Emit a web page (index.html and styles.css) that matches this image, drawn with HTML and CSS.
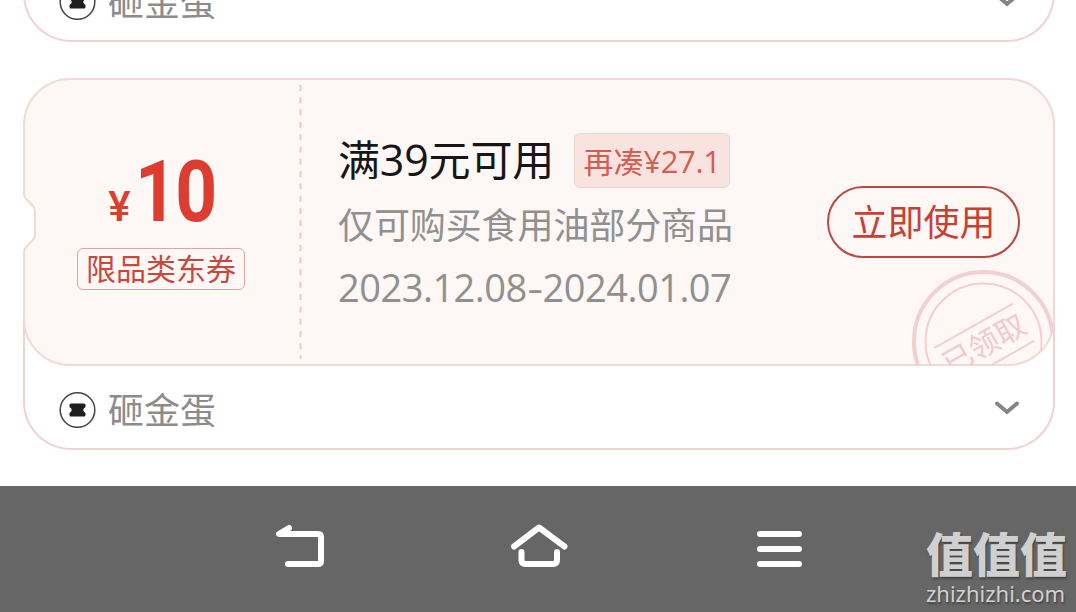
FILE: index.html
```html
<!DOCTYPE html>
<html lang="zh-CN">
<head>
  <meta charset="utf-8">
  <title>优惠券</title>
  <link rel="stylesheet" href="styles.css">
</head>
<body>

  <div class="coupon-list">
    <div class="coupon-footer previous">
      <svg class="ticket-icon" width="38" height="38" viewBox="0 0 38 38">
        <circle cx="19.500" cy="19" r="17.3"/>
        <path d="M13 12.500h13q1.500 0 1.500 1.500v2q-4.500 3 0 6v2q0 1.500-1.500 1.500h-13q-1.500 0-1.500-1.500v-2q4.500-3 0-6v-2q0-1.500 1.500-1.500z"/>
      </svg>
      <span class="source">砸金蛋</span>
      <svg class="chevron" width="26" height="16" viewBox="0 0 26 16"><path d="M3 3.500l10 8.500 10-8.500"/></svg>
    </div>

    <div class="coupon">
      <div class="coupon-main">
        <svg class="coupon-bg" width="1032" height="288" viewBox="0 0 1032 288">
          <defs>
            <clipPath id="panel">
              <path d="M47 1H985A46 46 0 0 1 1031 47V241A46 46 0 0 1 985 287H47A46 46 0 0 1 1 241V174Q1 171 4 168L9 163Q12 160 12 156V134Q12 130 9 127L4 122Q1 119 1 116V47A46 46 0 0 1 47 1Z"/>
            </clipPath>
          </defs>
          <path class="panel" d="M47 1H985A46 46 0 0 1 1031 47V241A46 46 0 0 1 985 287H47A46 46 0 0 1 1 241V174Q1 171 4 168L9 163Q12 160 12 156V134Q12 130 9 127L4 122Q1 119 1 116V47A46 46 0 0 1 47 1Z"/>
          <path class="divider" d="M277.500 7V281"/>
          <g class="stamp" clip-path="url(#panel)">
            <circle class="ring" cx="960.500" cy="263.500" r="69.500"/>
            <circle cx="960.500" cy="263.500" r="58"/>
            <g transform="translate(961 266) rotate(-29.500)">
              <path d="M-45 -21H45M-45 22H45"/>
              <text x="0" y="11" text-anchor="middle">已领取</text>
            </g>
          </g>
        </svg>

        <div class="amount-col">
          <div class="amount"><span class="yen">¥</span><span class="num">10</span></div>
          <span class="type">限品类东券</span>
        </div>
        <div class="info">
          <div class="title-row">
            <span class="title">满<span class="digits">39</span>元可用</span>
            <span class="tag">再凑<span class="digits">¥27.1</span></span>
          </div>
          <div class="desc">仅可购买食用油部分商品</div>
          <div class="date">2023.12.08<span class="dash">-</span>2024.01.07</div>
        </div>
        <button type="button" class="use-btn">立即使用</button>
      </div>

      <div class="coupon-footer">
        <svg class="ticket-icon" width="38" height="38" viewBox="0 0 38 38">
          <circle cx="19.500" cy="19" r="17.3"/>
          <path d="M13 12.500h13q1.500 0 1.500 1.500v2q-4.500 3 0 6v2q0 1.500-1.500 1.500h-13q-1.500 0-1.500-1.500v-2q4.500-3 0-6v-2q0-1.500 1.500-1.500z"/>
        </svg>
        <span class="source">砸金蛋</span>
        <svg class="chevron" width="26" height="16" viewBox="0 0 26 16"><path d="M3 3.500l10 8.500 10-8.500"/></svg>
      </div>
    </div>
  </div>

  <div class="navbar">
    <svg width="52" height="46" viewBox="0 0 52 46"><path d="M14 5L4 11H43Q46 11 46 14V38Q46 41 43 41H13"/></svg>
    <svg width="60" height="46" viewBox="0 0 60 46"><path d="M5 23.500L30 4.500L55.500 23.500M12.500 29V37Q12.500 41 16.500 41H44Q48 41 48 37V29"/></svg>
    <svg width="52" height="46" viewBox="0 0 52 46"><path d="M6 11H45M6 26H45M6 41H45"/></svg>
  </div>

  <div class="watermark">
    <div class="wm-name">值值值</div>
    <div class="wm-url">zhizhizhi.com</div>
  </div>

</body>
</html>
```
FILE: styles.css
```css
* {
  box-sizing: border-box;
}

body {
  margin: 0;
  height: 612px;
  overflow: hidden;
  display: flex;
  flex-direction: column;
  background-color: #fff;
  font-family: "Open Sans", "Noto Sans CJK SC", sans-serif;
}

.coupon-list {
  height: 486px;
  padding: 0 21px 0 23px;
  overflow: hidden;
}

.coupon {
  width: 1032px;
}

.coupon-main {
  position: relative;
  z-index: 1;
  height: 288px;
  display: flex;
  align-items: center;
}

.coupon-bg {
  position: absolute;
  left: 0;
  top: 0;
}

.panel {
  fill: #fdf7f5;
  stroke: #f2d8d6;
  stroke-width: 2;
}

.divider {
  stroke: #edc9c9;
  stroke-width: 2;
  stroke-dasharray: 6 6.300;
}

.stamp {
  fill: none;
  stroke: #f2d0cf;
  stroke-width: 2;
}

.stamp .ring {
  stroke-width: 4;
}

.stamp text {
  fill: #f0cbca;
  stroke: none;
  font-family: "Noto Sans CJK SC", sans-serif;
  font-size: 30px;
}

.amount-col {
  position: relative;
  width: 276px;
  height: 288px;
  padding-top: 74px;
  display: flex;
  flex-direction: column;
  align-items: center;
}

.amount {
  display: flex;
  align-items: baseline;
  height: 96px;
  color: #dc3d30;
  font-family: Roboto, sans-serif;
}

.yen {
  margin-right: 4px;
  font-size: 42px;
  line-height: 80px;
  font-weight: 500;
}

.num {
  width: 79px;
  font-size: 85px;
  line-height: 80px;
  font-weight: 700;
  letter-spacing: -2px;
  transform: scaleX(.86);
  transform-origin: left;
}

.type {
  height: 42px;
  padding: 0 8px;
  border: 1px solid #dfa3a2;
  border-radius: 6px;
  color: #c9483d;
  font-family: "Noto Sans CJK SC", sans-serif;
  font-size: 30px;
  line-height: 37px;
  white-space: nowrap;
}

.info {
  position: relative;
  flex: 1;
  height: 288px;
  padding: 55px 0 0 39px;
}

.title-row {
  display: flex;
  align-items: center;
  height: 55px;
}

.title {
  width: 236px;
  padding-bottom: 2px;
  color: #161616;
  font-size: 42px;
  line-height: 50px;
  letter-spacing: -.2px;
  white-space: nowrap;
}

.title .digits {
  font-size: 43px;
}

.tag {
  width: 156px;
  height: 55px;
  border: 1px solid #f5d3d0;
  border-radius: 6px;
  background-color: #f9e3e0;
  color: #d65b50;
  font-size: 30px;
  line-height: 54px;
  text-align: center;
  white-space: nowrap;
}

.tag .digits {
  font-size: 31px;
  letter-spacing: -.4px;
}

.desc {
  margin-top: 12px;
  color: #919090;
  font-size: 36px;
  line-height: 52px;
  letter-spacing: -.1px;
  white-space: nowrap;
}

.date {
  margin-top: 9px;
  color: #919090;
  font-size: 38px;
  line-height: 52px;
  letter-spacing: -.5px;
  white-space: nowrap;
}

.date .dash {
  display: inline-block;
  margin: 0 2px;
  transform: scaleX(1.3);
}

.use-btn {
  position: relative;
  width: 193px;
  height: 72px;
  margin-right: 35px;
  padding: 0 0 4px;
  border: 2px solid #b84a42;
  border-radius: 36px;
  background-color: transparent;
  color: #c74034;
  font-family: "Noto Sans CJK SC", sans-serif;
  font-size: 36px;
}

.coupon-footer {
  width: 1032px;
  height: 130px;
  margin-top: -46px;
  padding: 51px 33px 0;
  display: flex;
  align-items: center;
  border: 2px solid #f0d3d1;
  border-top: none;
  border-radius: 0 0 48px 48px;
}

.coupon-footer.previous {
  margin-top: -88px;
  margin-bottom: 36px;
}

.source {
  flex: 1;
  margin: -3px 0 0 12px;
  color: #8c8c8c;
  font-family: "Noto Sans CJK SC", sans-serif;
  font-size: 36px;
  line-height: 50px;
}

.ticket-icon circle {
  fill: none;
  stroke: #444;
  stroke-width: 1.5;
}

.ticket-icon path {
  fill: #1e1e1e;
}

.chevron {
  margin-top: -4px;
  fill: none;
  stroke: #858585;
  stroke-width: 4;
  stroke-linecap: round;
}

.navbar {
  height: 126px;
  padding: 37px 270px 0 275px;
  display: flex;
  justify-content: space-between;
  background-color: #666;
}

.navbar svg {
  fill: none;
  stroke: #fff;
  stroke-width: 6;
  stroke-linecap: round;
  stroke-linejoin: round;
}

.navbar svg:nth-child(2) {
  margin-left: -4px;
}

.watermark {
  position: absolute;
  right: 8px;
  bottom: 5px;
  width: 142px;
  color: #d0d0d0;
  text-shadow: 1px 2px 2px #444;
  white-space: nowrap;
}

.wm-name {
  margin-bottom: 2px;
  font-family: "Noto Sans CJK SC", sans-serif;
  font-size: 47px;
  font-weight: 900;
  line-height: 50px;
}

.wm-url {
  font-family: "Noto Sans", sans-serif;
  font-size: 22px;
  line-height: 28px;
}
```
